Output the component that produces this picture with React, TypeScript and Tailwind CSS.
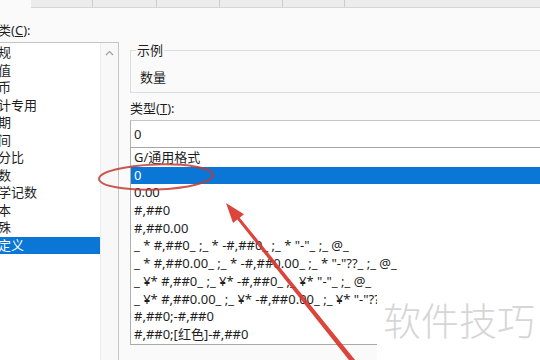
import React from "react";

const categories = ["常规", "数值", "货币", "会计专用", "日期", "时间", "百分比", "分数", "科学记数", "文本", "特殊", "自定义"];

const formats = [
  "G/通用格式",
  "0",
  "0.00",
  "#,##0",
  "#,##0.00",
  '_ * #,##0_ ;_ * -#,##0_ ;_ * "-"_ ;_ @_ ',
  '_ * #,##0.00_ ;_ * -#,##0.00_ ;_ * "-"??_ ;_ @_ ',
  '_ ¥* #,##0_ ;_ ¥* -#,##0_ ;_ ¥* "-"_ ;_ @_ ',
  '_ ¥* #,##0.00_ ;_ ¥* -#,##0.00_ ;_ ¥* "-"??_ ;_ @_ ',
  "#,##0;-#,##0",
  "#,##0;[红色]-#,##0",
];

const tabWidths = ["w-[62px]", "w-[64px]", "w-[63px]", "w-[63px]", "w-[62px]"];

export default function App() {
  return (
    <div className="relative h-[360px] w-[540px] overflow-hidden bg-[#fafafa] text-[13px] text-[#1e1e1e] font-['Noto_Sans','Noto_Sans_CJK_SC',sans-serif]">
      {/* tab strip, cut off at the top */}
      <div className="ml-[31px] flex h-2 border-b border-[#d6d6d6] bg-[#ececec]">
        {tabWidths.map((w, i) => (
          <div key={i} className={`${w} h-full border-r border-[#cdcdcd]`} />
        ))}
      </div>

      <div className="flex">
        {/* category list */}
        <div className="-ml-[18px] flex w-[137px] shrink-0 flex-col">
          <div className="mt-[14px] h-[17px] pl-[3px] leading-[17px] whitespace-nowrap">
            分类(<span className="underline">C</span>):
          </div>
          <div className="mt-[3px] flex h-[330px] border border-[#c4c4c4] bg-white">
            <div className="flex w-[117px] flex-col pt-px">
              {categories.map((c, i) => (
                <div
                  key={c}
                  className={
                    i === categories.length - 1
                      ? "h-[17.5px] bg-[#0a76d6] pl-[2px] leading-[17.5px] whitespace-nowrap text-white"
                      : "h-[17.5px] pl-[2px] leading-[17.5px] whitespace-nowrap"
                  }
                >
                  {c}
                </div>
              ))}
            </div>
            <div className="flex w-[18px] justify-center border-l border-[#ececec] bg-[#f8f8f8] pt-[7px]">
              <svg width="9" height="6" viewBox="0 0 9 6">
                <path d="M1 5 L4.5 1.5 L8 5" fill="none" stroke="#a0a0a0" strokeWidth="1.2" />
              </svg>
            </div>
          </div>
        </div>

        {/* right side */}
        <div className="ml-[11px] flex flex-1 flex-col">
          <div className="mt-[42px] h-[43px] border-y border-l border-[#dcdcdc]">
            <div className="-mt-[9px] ml-[5px] w-fit bg-[#fafafa] px-px leading-[17px]">示例</div>
            <div className="mt-[10px] pl-[9px] leading-[17px]">数量</div>
          </div>

          <div className="mt-[7px] h-[17px] leading-[17px]">
            类型(<span className="underline">T</span>):
          </div>

          <div className="mt-[3px] h-[28px] border-y border-l border-t-[#c6c6c6] border-b-[#a6a6a6] border-l-[#b4b4b4] bg-white pl-[3px] leading-[26px]">
            0
          </div>

          <div className="flex flex-col border-b border-l border-b-[#a8a8a8] border-l-[#b0b0b0] bg-white pt-px">
            {formats.map((f, i) => (
              <div
                key={i}
                className={
                  i === 1
                    ? "h-[17.7px] bg-[#0a76d6] pl-[3px] leading-[17.7px] whitespace-pre text-white"
                    : "h-[17.7px] pl-[3px] leading-[17.7px] whitespace-pre"
                }
              >
                {f}
              </div>
            ))}
          </div>
        </div>
      </div>

      {/* watermark */}
      <div className="absolute top-[274px] right-0 bottom-0 left-[377px] bg-white pt-[26px] pl-[6px]">
        <div className="text-[38px] leading-[38px] whitespace-nowrap text-[#d6d6d6] font-['Noto_Sans_CJK_SC',sans-serif] font-light">
          软件技巧
        </div>
      </div>

      {/* annotations */}
      <svg className="pointer-events-none absolute inset-0" width="540" height="360" viewBox="0 0 540 360">
        <ellipse
          cx="156"
          cy="177"
          rx="57"
          ry="12.5"
          transform="rotate(-2 156 177)"
          fill="none"
          stroke="#c23a30"
          strokeWidth="2"
          opacity="0.85"
        />
        <polygon
          points="226,203 244,214.2 239.7,217.7 361.9,368.4 358.1,371.6 237.3,219.5 233,223"
          fill="#d8352b"
          opacity="0.92"
        />
      </svg>
    </div>
  );
}
